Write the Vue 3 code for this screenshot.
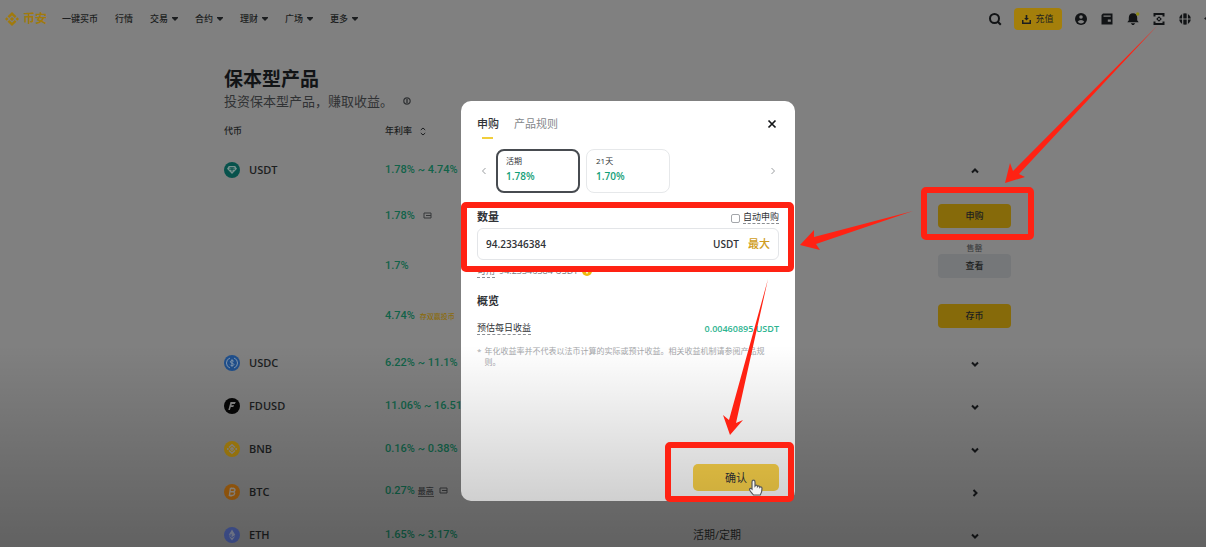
<script setup>
import { ref } from 'vue'

const nav = [
  { label: '一键买币', menu: false },
  { label: '行情', menu: false },
  { label: '交易', menu: true },
  { label: '合约', menu: true },
  { label: '理财', menu: true },
  { label: '广场', menu: true },
  { label: '更多', menu: true },
]

const offers = [
  { rate: '1.78%', card: true, action: '申购', kind: 'gold' },
  { rate: '1.7%', note: '售罄', action: '查看', kind: 'grey' },
  { rate: '4.74%', tag: '存双赢投币', action: '存币', kind: 'gold' },
]

const tokens = [
  { name: 'USDC', id: 'usdc', color: '#1f4f8c', rate: '6.22% ~ 11.1%' },
  { name: 'FDUSD', id: 'fdusd', color: '#060606', rate: '11.06% ~ 16.51%' },
  { name: 'BNB', id: 'bnb', color: '#a8810f', rate: '0.16% ~ 0.38%' },
  { name: 'BTC', id: 'btc', color: '#a8630f', rate: '0.27%', top: '最高', card: true, side: true },
  { name: 'ETH', id: 'eth', color: '#4a5da5', rate: '1.65% ~ 3.17%', term: '活期/定期' },
]

const terms = [
  { label: '活期', rate: '1.78%' },
  { label: '21天', rate: '1.70%' },
]

const selected = ref(0)
const amount = ref('94.23346384')
const auto = ref(false)
</script>

<template>
  <div class="page">
    <header class="topbar">
      <a href="#" class="brand">
        <svg width="14" height="14" viewBox="0 0 14 14" fill="none" stroke="currentColor" stroke-width="2.4">
          <path d="M3.4 5.2 7 1.7l3.600 3.500M3.400 8.800 7 12.300l3.600-3.500" />
          <path d="M7 4.900 9.100 7 7 9.100 4.900 7z" fill="currentColor" stroke="none" />
          <path d="M1.700 5.300 3.400 7 1.700 8.700 0 7zM12.300 5.300 14 7l-1.700 1.700L10.600 7z" fill="currentColor" stroke="none" />
        </svg>
        <span>币安</span>
      </a>
      <nav class="nav">
        <a v-for="item in nav" :key="item.label" href="#">
          {{ item.label }}
          <svg v-if="item.menu" width="6" height="4" viewBox="0 0 6 4"><path d="M0 0h6v1L3 4 0 1z" fill="currentColor" /></svg>
        </a>
      </nav>
      <div class="tools">
        <button class="icon" aria-label="搜索">
          <svg width="14" height="14" viewBox="0 0 14 14" fill="none" stroke="currentColor" stroke-width="2"><circle cx="6.500" cy="6.500" r="4.500" /><path d="m9.500 9.500 3.300 3.300" /></svg>
        </button>
        <button class="deposit">
          <svg width="9" height="9" viewBox="0 0 9 9"><path d="M3.700 0h1.600v3h1.600L4.500 5.600 2.100 3h1.600zM0 5h1.500v2.400h6V5H9v4H0z" fill="currentColor" /></svg>
          充值
        </button>
        <button class="icon" aria-label="账户">
          <svg width="14" height="14" viewBox="0 0 14 14"><circle cx="7" cy="7" r="6" fill="currentColor" /><circle cx="7" cy="5" r="1.800" fill="#808080" /><path d="M3.700 9.800a3.600 3 0 0 1 6.600 0A4 4 0 0 1 7 11.400a4 4 0 0 1-3.300-1.600z" fill="#808080" /></svg>
        </button>
        <button class="icon" aria-label="钱包">
          <svg width="14" height="14" viewBox="0 0 14 14"><path d="M3 1.500h9.500v11H1.500V3z" fill="currentColor" /><path d="M3.500 3.400h7.200v1.400H3.500zM7.800 7.600h3v2.200h-3z" fill="#808080" /></svg>
        </button>
        <button class="icon" aria-label="通知">
          <svg width="14" height="14" viewBox="0 0 14 14"><path d="M7 1.300c2.800 0 4.200 2 4.200 4.400v2.600l1.500 2H1.300l1.500-2V5.700c0-2.400 1.400-4.400 4.200-4.400zM4.800 11.200h4.400L7.800 13H6.200z" fill="currentColor" /><circle cx="11.700" cy="2" r="1.700" fill="#8d8a13" /></svg>
        </button>
        <button class="icon" aria-label="下载">
          <svg width="14" height="14" viewBox="0 0 14 14" fill="none" stroke="currentColor" stroke-width="2"><path d="M2.500 4.500V2h9v2.500M2.500 9.500V12h9V9.500" /><path d="M7 4.200 9.800 7 7 9.800 4.200 7z" fill="currentColor" stroke="none" /><circle cx="7" cy="7" r="1" fill="#808080" stroke="none" /></svg>
        </button>
        <button class="icon" aria-label="语言">
          <svg width="14" height="14" viewBox="0 0 14 14"><circle cx="7" cy="7" r="5.800" fill="currentColor" /><path d="M1 7h12M4.700 1.500v11M9.300 1.500v11" stroke="#808080" stroke-width="1.200" /></svg>
        </button>
      </div>
    </header>

    <main class="content">
      <h1>保本型产品</h1>
      <p class="lead">
        投资保本型产品，赚取收益。
        <svg width="8" height="8" viewBox="0 0 8 8"><circle cx="4" cy="4" r="3.200" fill="none" stroke="currentColor" stroke-width="1.200" /><path d="M4 2v4" stroke="currentColor" stroke-width="1.400" /></svg>
      </p>
      <table class="products">
        <colgroup><col class="c-token"><col class="c-rate"><col><col class="c-action"></colgroup>
        <thead>
          <tr>
            <th>代币</th>
            <th colspan="3">
              年利率
              <svg class="sort" width="6" height="9" viewBox="0 0 6 9" fill="none" stroke="currentColor"><path d="M.8 3 3 1l2.200 2M.8 6 3 8l2.200-2" /></svg>
            </th>
          </tr>
        </thead>
        <tbody>
          <tr class="token">
            <td>
              <span class="coin">
                <svg width="16" height="16" viewBox="0 0 16 16"><circle cx="8" cy="8" r="8" fill="#07524c" /><path d="M4.800 4h6.400L13 6.800 8 12 3 6.800z" fill="#77918e" /><path d="M5.600 5.800h4.800M8 5.800v3.800M5.200 7.200h5.600" stroke="#07524c" fill="none" /></svg>
                USDT
              </span>
            </td>
            <td class="rate">1.78% ~ 4.74%</td>
            <td></td>
            <td class="act"><button class="toggle" aria-label="收起"><svg width="8" height="6" viewBox="0 0 8 6"><path d="m1 4.500 3-3 3 3" /></svg></button></td>
          </tr>
          <tr v-for="offer in offers" :key="offer.rate" class="offer">
            <td></td>
            <td class="rate">
              {{ offer.rate }}
              <svg v-if="offer.card" class="card" width="9" height="7" viewBox="0 0 9 7"><path d="M1 1h7v5H1zM3 3.500h5" /></svg>
              <span v-if="offer.tag" class="tag">{{ offer.tag }}</span>
            </td>
            <td></td>
            <td class="act">
              <span v-if="offer.note" class="note">{{ offer.note }}</span>
              <button class="action" :class="offer.kind">{{ offer.action }}</button>
            </td>
          </tr>
          <tr v-for="token in tokens" :key="token.id" class="token">
            <td>
              <span class="coin">
                <svg width="16" height="16" viewBox="0 0 16 16" fill="none">
                  <circle cx="8" cy="8" r="8" :fill="token.color" />
                  <g v-if="token.id === 'usdc'" stroke="#7f95ad"><path d="M6 3a5.300 5.300 0 0 0 0 10M10 3a5.300 5.300 0 0 1 0 10M9.800 6.400C9.500 5.300 6.300 5.200 6.300 6.800S9.900 8 9.900 9.500s-3.500 1.500-3.800.2M8 4.200v7.600" /></g>
                  <path v-else-if="token.id === 'fdusd'" d="M6.500 4h5.300l-1 2H7.800l-.4 1.200h2.800l-1 1.900H6.800L5.900 12H4.300z" fill="#858585" />
                  <g v-else-if="token.id === 'bnb'" stroke="#918e86" stroke-width="1.500"><path d="M5 6.500 8 3.700l3 2.800M5 9.500l3 2.800 3-2.800M3.800 7v2M12.200 7v2M8 6.800 9.200 8 8 9.200 6.800 8z" /></g>
                  <path v-else-if="token.id === 'btc'" d="m6.500 4-1.200 8M8 3.500l-.2 1M9.500 3.600l-.2 1M7 11.700l-.2 1M5.800 4.500h3.400c2.600 0 2.200 3.300-.3 3.300H6.600h2.300c2.600 0 2.100 3.700-.7 3.700H4.800" stroke="#9e978d" stroke-width="1.400" />
                  <g v-else><path d="m8 2.500 3.300 5.600L8 10 4.700 8.100zM4.700 9.100 8 11l3.300-1.900L8 13.500z" fill="#8990a8" /><path d="M8 6.700v3.200L4.800 8.100z" fill="#6473a5" /></g>
                </svg>
                {{ token.name }}
              </span>
            </td>
            <td class="rate">
              {{ token.rate }}
              <span v-if="token.top" class="top">{{ token.top }}</span>
              <svg v-if="token.card" class="card" width="9" height="7" viewBox="0 0 9 7"><path d="M1 1h7v5H1zM3 3.500h5" /></svg>
            </td>
            <td class="term">{{ token.term }}</td>
            <td class="act">
              <button class="toggle" aria-label="展开">
                <svg v-if="token.side" width="8" height="8" viewBox="0 0 8 8"><path d="m2.500 1 3 3-3 3" /></svg>
                <svg v-else width="8" height="6" viewBox="0 0 8 6"><path d="m1 1.500 3 3 3-3" /></svg>
              </button>
            </td>
          </tr>
        </tbody>
      </table>
    </main>

    <div class="layer">
      <section class="modal" role="dialog" aria-label="申购">
        <div class="tabs">
          <button class="tab on">申购</button>
          <button class="tab">产品规则</button>
          <button class="close" aria-label="关闭"><svg width="10" height="10" viewBox="0 0 10 10"><path d="m1.500 1.500 7 7m0-7-7 7" stroke="currentColor" stroke-width="1.700" /></svg></button>
        </div>
        <div class="terms">
          <button class="step" aria-label="上一个"><svg width="6" height="8" viewBox="0 0 6 8"><path d="m4.500 1-3 3 3 3" /></svg></button>
          <button v-for="(t, i) in terms" :key="t.label" class="choice" :class="{ on: selected === i }" @click="selected = i">
            <span>{{ t.label }}</span><b>{{ t.rate }}</b>
          </button>
          <button class="step next" aria-label="下一个"><svg width="6" height="8" viewBox="0 0 6 8"><path d="m1.500 1 3 3-3 3" /></svg></button>
        </div>
        <div class="amount-head">
          <label for="amount">数量</label>
          <label class="auto"><input v-model="auto" type="checkbox"><span>自动申购</span></label>
        </div>
        <div class="field">
          <input id="amount" v-model="amount" type="text">
          <span>USDT</span>
          <button>最大</button>
        </div>
        <p class="avail"><span>可用</span> 94.23346384 USDT
          <svg width="10" height="10" viewBox="0 0 10 10"><circle cx="5" cy="5" r="5" fill="#efb90b" /><path d="M5 2.500v5M2.500 5h5" stroke="#fff" stroke-width="1.500" /></svg>
        </p>
        <h2>概览</h2>
        <div class="estimate"><span>预估每日收益</span><b>0.00460895 USDT</b></div>
        <p class="hint"><span>*</span><span>年化收益率并不代表以法币计算的实际或预计收益。相关收益机制请参阅产品规则。</span></p>
        <button class="confirm">确认</button>
      </section>
    </div>

    <div class="shade"></div>

    <svg class="marks" width="1206" height="547" viewBox="0 0 1206 547" aria-hidden="true">
      <path d="M1206 17v3l-2-1.500z" fill="#1c1e20" />
      <path d="M752 489v-7c0-2.500 3-2.500 3 0v4c1-1.200 2.500-1 2.500.6.800-1 2.300-.8 2.300.7.900-.8 2.200-.3 2.200 1.200 0 3-.6 5-1.800 6.500h-6.700c-1.500-2-4-4.200-4-5.600 0-1.200 1.500-1.400 2.500-.4z" fill="#f4f4f4" stroke="#55575a" stroke-width="1.200" />
      <g fill="none" stroke="#ff2213" stroke-width="6">
        <rect x="464" y="205" width="327" height="64" rx="2" />
        <rect x="924" y="190" width="107" height="47" rx="2" />
        <rect x="668" y="445" width="123" height="54" rx="2" />
      </g>
      <g fill="#ff2213">
        <path d="M1158 25 1019 174l6 3-20 6 5-20 3 8z" />
        <path d="M913 211 816 244l4 6-20-5 14-15v7z" />
        <path d="m768 279-32 144 7-3-13 15-7-20 6 5z" />
      </g>
    </svg>
  </div>
</template>

<style>
body { background: #808080; }
</style>

<style scoped>
* { box-sizing: border-box; }
.page {
  position: relative;
  height: 100vh;
  overflow: hidden;
  background: #808080;
  color: #1c1e20;
  font: 11px/16px "Open Sans", "Noto Sans CJK SC", sans-serif;
}
button { border: 0; padding: 0; background: none; color: inherit; font: inherit; cursor: pointer; }
a { color: inherit; text-decoration: none; }
h1, h2, p { margin: 0; }
svg { flex: none; }

.topbar { display: flex; align-items: center; height: 38px; padding: 0 14px 0 5px; }
.brand { display: flex; align-items: center; gap: 4px; width: 57px; color: #a17a0c; font-size: 12px; font-weight: 700; }
.nav { display: flex; gap: 17px; font-size: 9px; font-weight: 500; }
.nav a { display: flex; align-items: center; gap: 4px; }
.tools { display: flex; align-items: center; gap: 12px; margin-left: auto; }
.icon { display: flex; color: #121416; }
.deposit { display: flex; align-items: center; justify-content: center; gap: 4px; width: 48px; height: 22px; border-radius: 4px; background: #a47f0b; font-size: 9px; }

.content { padding: 28px 195px 0 224px; }
h1 { font-size: 19px; line-height: 26px; font-weight: 700; color: #121416; }
.lead { display: flex; align-items: center; gap: 10px; font-size: 13px; line-height: 18px; color: #303234; white-space: nowrap; }
.products { width: 100%; table-layout: fixed; border-collapse: collapse; }
.c-token { width: 161px; }
.c-rate { width: 308px; }
.c-action { width: 73px; }
.products th { height: 38px; padding: 4px 0 0; text-align: left; font-size: 9px; font-weight: 500; vertical-align: middle; }
.sort { margin-left: 6px; vertical-align: middle; }
.products td { padding: 0; vertical-align: middle; white-space: nowrap; }
.token { height: 43px; }
.offer { height: 50px; }
.coin { display: flex; align-items: center; gap: 9px; font-weight: 600; font-size: 11px; }
.rate { color: #126349; font: 500 11px/16px Roboto, "Noto Sans CJK SC", sans-serif; }
.card { margin-left: 5px; fill: none; stroke: #36383a; stroke-width: 1; }
.tag { margin-left: 2px; color: #8b6b0a; font-size: 7px; }
.top { border-bottom: 1px solid #444; color: #303234; font-size: 8px; }
.term { font-size: 11px; }
.act { position: relative; text-align: center; }
.toggle { vertical-align: middle; }
.toggle svg { display: block; fill: none; stroke: #151719; stroke-width: 2; }
.action { width: 100%; height: 24px; border-radius: 4px; font-size: 9px; font-weight: 500; display: block; }
.gold { background: #866a0a; }
.grey { background: #757779; }
.note { position: absolute; left: 0; right: 0; top: 2px; font-size: 8px; line-height: 10px; color: #36383a; }

.layer { position: absolute; inset: 0; display: flex; justify-content: center; align-items: flex-start; padding: 101px 0 0 50px; }
.modal { display: flex; flex-direction: column; width: 334px; min-height: 400px; padding: 14px 16px 10px; border-radius: 10px; background: #fff; color: #303236; }
.tabs { display: flex; align-items: flex-start; gap: 15px; height: 34px; }
.tab { position: relative; font-size: 11px; line-height: 18px; color: #85888c; }
.tab.on { color: #303236; font-weight: 500; }
.tab.on::after { content: ""; position: absolute; left: 5px; bottom: -6px; width: 11px; height: 2px; background: #f1ce3c; }
.close { margin: 4px 2px 0 auto; color: #151719; }
.close svg { display: block; }
.terms { display: flex; align-items: center; gap: 6px; height: 44px; }
.step { width: 13px; }
.step svg { display: block; margin: 0 auto; fill: none; stroke: #9a9da0; stroke-width: 1; }
.next { margin-left: auto; }
.choice { display: flex; flex-direction: column; justify-content: center; width: 84px; height: 44px; padding: 0 9px 4px; border: 1px solid #e6e8ea; border-radius: 8px; text-align: left; }
.choice.on { border: 2px solid #474b50; padding: 0 8px 4px; }
.choice span { font-size: 8px; line-height: 14px; }
.choice b { color: #13a078; font-size: 10px; font-weight: 600; line-height: 16px; }
.amount-head { display: flex; justify-content: space-between; align-items: center; margin-top: 14px; height: 20px; font-size: 11px; font-weight: 700; }
.auto { display: flex; align-items: center; gap: 3px; font-size: 9px; font-weight: 400; }
.auto input { appearance: none; width: 9px; height: 9px; margin: 3px 0 0; border: 1px solid #a3a6aa; border-radius: 2px; }
.auto span, .avail span, .estimate span { border-bottom: 1px dashed #8b8e92; }
.auto span { line-height: 12px; }
.field { display: flex; align-items: center; gap: 9px; height: 32px; margin-top: 1px; padding: 0 8px; border: 1px solid #e3e5e8; border-radius: 6px; font-weight: 600; font-size: 10px; }
.field input { flex: 1; min-width: 0; padding: 0; border: 0; outline: 0; background: none; color: #303236; font: inherit; }
.field button { color: #d09d22; font-weight: 500; font-size: 11px; }
.avail { display: flex; align-items: center; gap: 4px; height: 22px; color: #77797d; font-size: 9px; line-height: 12px; }
h2 { margin-top: 10px; font-size: 11px; line-height: 18px; font-weight: 700; }
.estimate { display: flex; justify-content: space-between; align-items: center; margin-top: 11px; font-size: 9px; line-height: 13px; }
.estimate b { color: #2db490; font-weight: 600; }
.hint { display: flex; gap: 3px; margin-top: 10px; padding-right: 14px; color: #a5a7aa; font-size: 8px; line-height: 11px; }
.confirm { align-self: flex-end; width: 86px; height: 27px; margin-top: auto; border-radius: 5px; background: #fcd44a; font-size: 11px; }

.shade { position: absolute; inset: 345px 0 0; background: linear-gradient(rgba(0, 0, 0, 0), rgba(0, 0, 0, .24)); pointer-events: none; }
.marks { position: absolute; left: 0; top: 0; pointer-events: none; }
</style>
